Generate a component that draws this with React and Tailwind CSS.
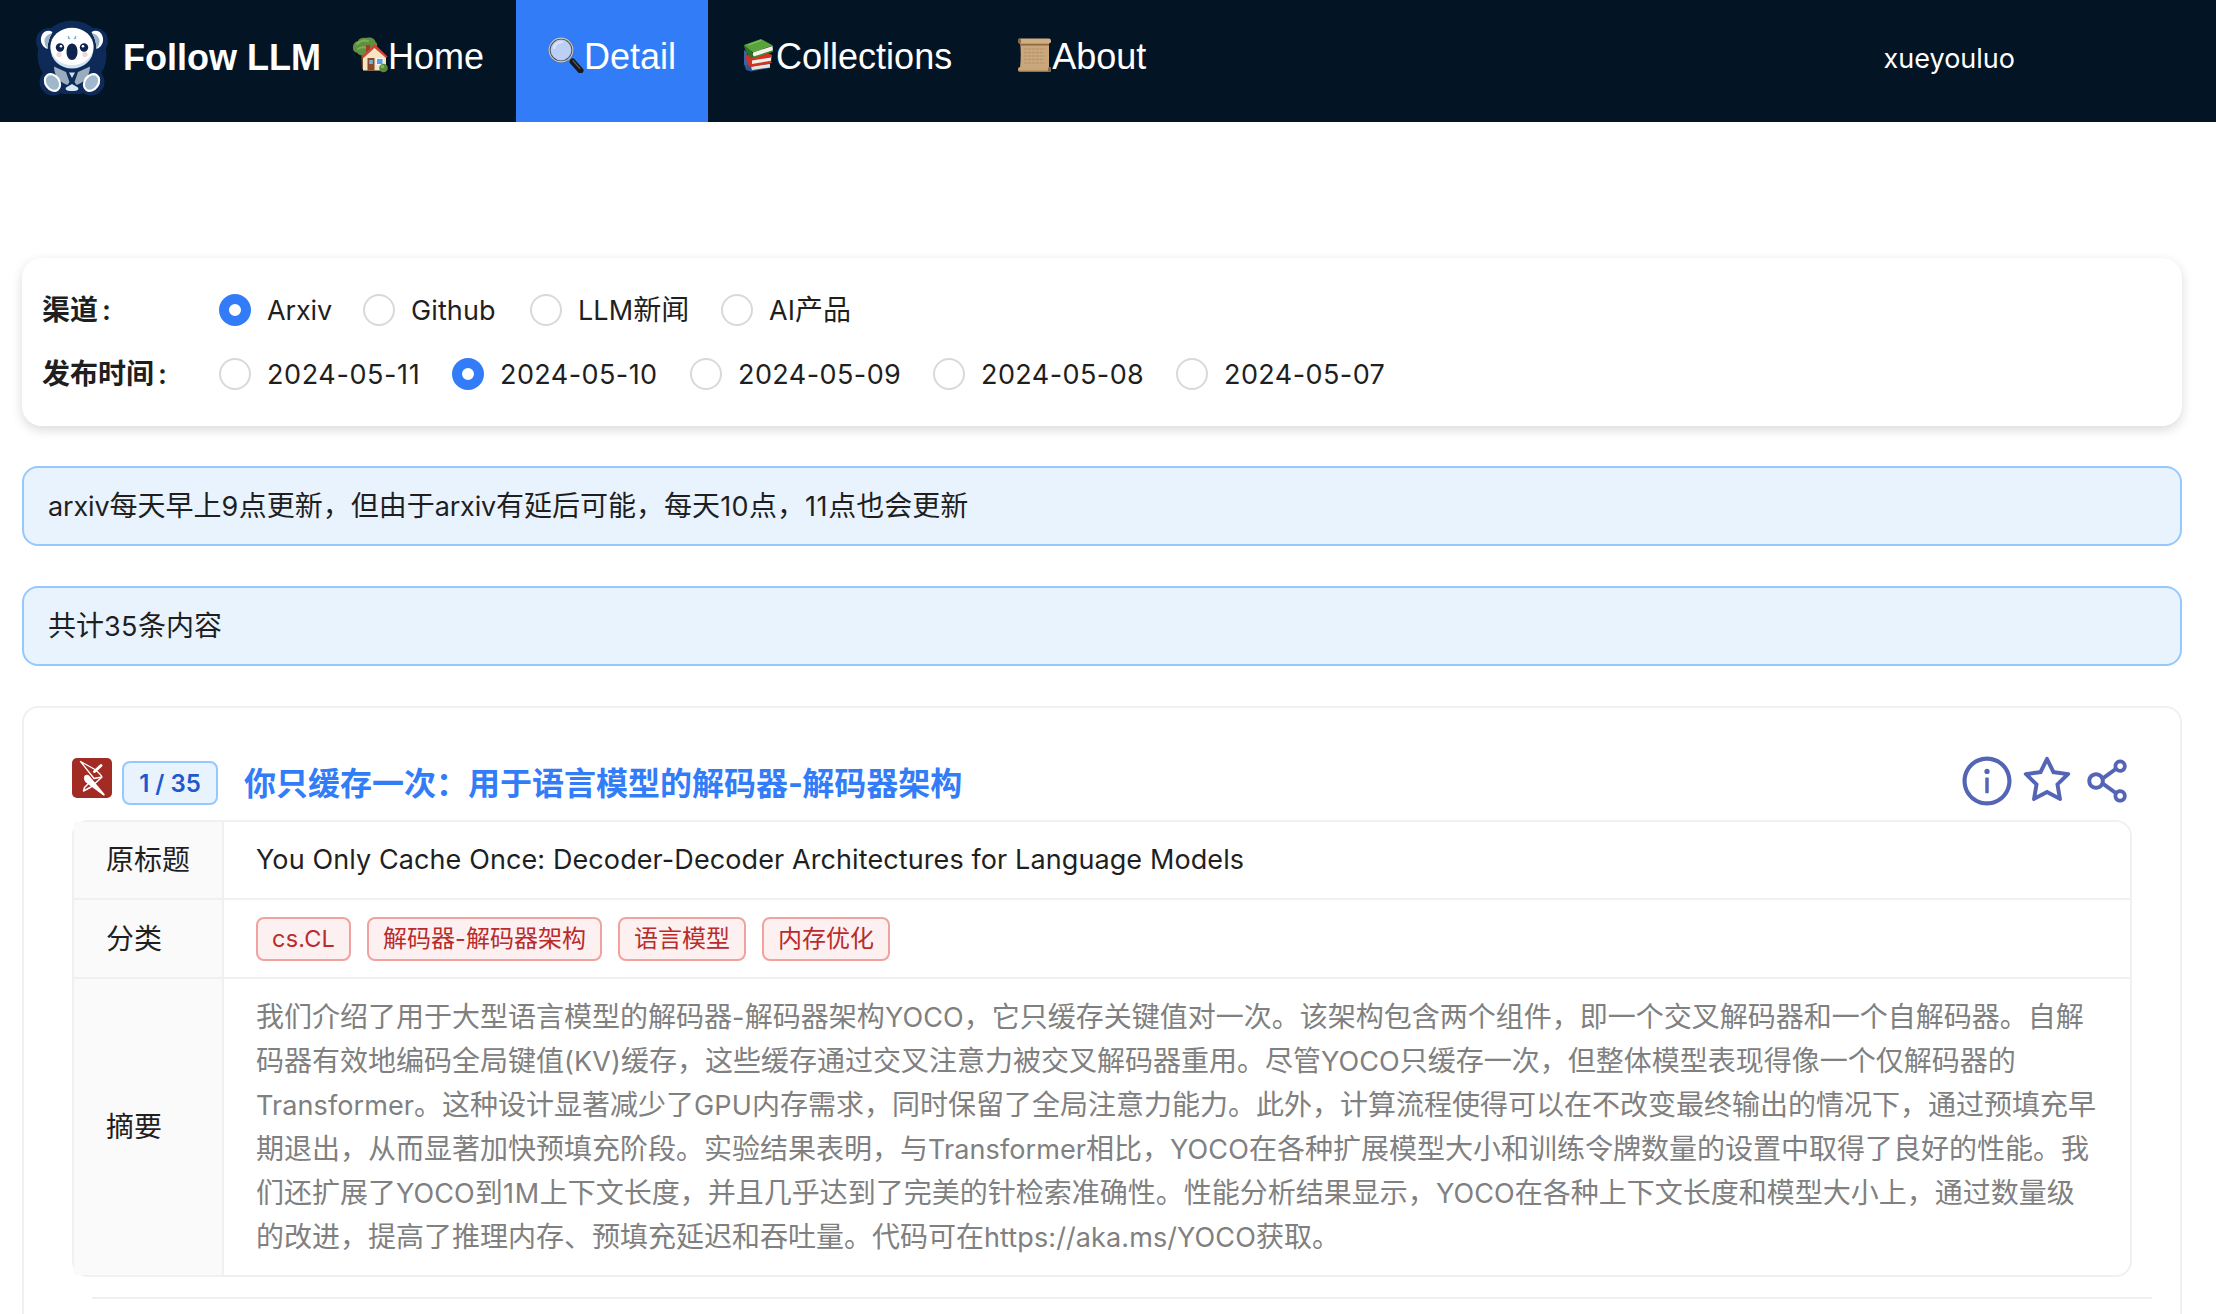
import { AiOutlineInfoCircle, AiOutlineStar, AiOutlineShareAlt } from "react-icons/ai";

function latinStyle(part) {
  if (/^11$|-11$/.test(part)) return "text-[27px] tracking-[0.6px]";
  if (/^[\d-]+$/.test(part)) return "text-[27px] tracking-[0.42px]";
  if (part === "1M") return "text-[27px] tracking-[0.8px]";
  if (/^arxiv$/i.test(part)) return "text-[27px] tracking-[-0.15px]";
  return "text-[27px] tracking-[0.1px]";
}

function Mixed({ text, latin }) {
  return text.split(/([\x20-\x7e]+)/).filter(Boolean).map((part, i) =>
    /^[\x20-\x7e]/.test(part) ? <span key={i} className={latin || latinStyle(part)}>{part}</span> : <span key={i}>{part}</span>
  );
}

function KoalaLogo() {
  return (
    <svg className="h-[80px] w-[76px] shrink-0" viewBox="0 0 76 80">
      <g fill="#0e2a58">
        <circle cx="38" cy="37" r="34.5" />
        <circle cx="15" cy="23" r="13" />
        <circle cx="61" cy="23" r="13" />
        <circle cx="19" cy="64" r="13.5" />
        <circle cx="57" cy="64" r="13.5" />
        <rect x="24" y="55" width="28" height="21" rx="6" />
      </g>
      <path d="M18.5 14C12 10 6 16 7 23c.6 4 3.5 7 6.500 8 .2-7 2-12 5-17Z" fill="#fff" />
      <path d="M18 15.500c-5 .5-8 4.500-7.500 8.500.3 3 1.500 5 3 6.500.3-6 1.800-11 4.500-15Z" fill="#9db4c8" />
      <path d="M57.500 14C64 10 70 16 69 23c-.6 4-3.500 7-6.500 8-.2-7-2-12-5-17Z" fill="#fff" />
      <path d="M58 15.500c5 .5 8 4.500 7.500 8.500-.3 3-1.500 5-3 6.500-.3-6-1.800-11-4.500-15Z" fill="#9db4c8" />
      <ellipse cx="38" cy="30.500" rx="21.500" ry="20" fill="#cfe3f0" />
      <ellipse cx="38" cy="28.500" rx="21.500" ry="18.700" fill="#fff" />
      <path d="M34 19l2 2M42 19l-2 2M34.500 18v3M41.500 18v3" stroke="#79b4d8" strokeWidth="1.300" />
      <circle cx="26" cy="29.500" r="4.200" fill="#0d2450" />
      <circle cx="50" cy="29.500" r="4.200" fill="#0d2450" />
      <circle cx="27" cy="28.300" r="1.300" fill="#fff" />
      <circle cx="49" cy="28.300" r="1.300" fill="#fff" />
      <circle cx="25" cy="36.500" r="2.600" fill="#f3d3d3" />
      <circle cx="51" cy="36.500" r="2.600" fill="#f3d3d3" />
      <path d="M38 25.500c3.600 0 5.500 3.800 5.500 8.500S41 42 38 42s-5.500-3.300-5.500-8 1.900-8.500 5.500-8.500Z" fill="#0d2450" />
      <path d="M20 48.500l12 5.500 3.500 10-2 3C27 65 20 59 20 48.500Z" fill="#9aadbf" />
      <path d="M56 48.500L44 54l-3.500 10 2 3C49 65 56 59 56 48.500Z" fill="#9aadbf" />
      <path d="M35 54.500h6L38 60Z" fill="#cfe0ec" />
      <path d="M38 66l6 3.500c1 2 0 3.500-6 3.500s-7-1.500-6-3.500Z" fill="#d5e8f3" />
      <ellipse cx="18.500" cy="64.500" rx="8" ry="10" transform="rotate(-35 18.500 64.500)" fill="#fff" />
      <ellipse cx="18.500" cy="64.500" rx="5.800" ry="8" transform="rotate(-35 18.500 64.500)" fill="#9fb8cc" />
      <ellipse cx="57.500" cy="64.500" rx="8" ry="10" transform="rotate(35 57.500 64.500)" fill="#fff" />
      <ellipse cx="57.500" cy="64.500" rx="5.800" ry="8" transform="rotate(35 57.500 64.500)" fill="#9fb8cc" />
    </svg>
  );
}

function HouseEmoji() {
  return (
    <svg className="size-9 shrink-0" viewBox="0 0 36 36">
      <path d="M9 14h3.500v18H10Z" fill="#7a4a2a" />
      <path d="M1 10C1 6 4 4.500 6 4c1-3 5-3.500 8-3 5-1.500 9 1 9.500 4 2.500 1.500 2 5 0 7-1 4-5 5-8 5-4 2.500-9 1.500-10-1C2 15.500.5 13 1 10Z" fill="#5f9040" />
      <path d="M5 7c3-3 7-4 11-3M6 12c3-2 6-2 9-1" stroke="#80ad58" strokeWidth="2" fill="none" strokeLinecap="round" />
      <path d="M11 20L23 9.500 34 20v13.500H11Z" fill="#f6e5c0" />
      <path d="M14 8h4v5l-4 3Z" fill="#a83a2c" />
      <path d="M22.500 7L35.500 19.500l-1.500 1.500L22.500 11 11.500 21l-1.500-1.500Z" fill="#cc463a" />
      <rect x="15.500" y="21" width="7" height="12.500" fill="#8a4b2a" />
      <rect x="17.200" y="23" width="3.600" height="4" fill="#6fb1e0" />
      <rect x="24.500" y="21.500" width="6.500" height="6" fill="#5f9ee0" stroke="#fff" strokeWidth=".8" />
      <circle cx="31.500" cy="31" r="4.300" fill="#5a8a38" />
      <circle cx="30.500" cy="29.500" r="1.800" fill="#83b953" />
    </svg>
  );
}

function MagnifierEmoji() {
  return (
    <svg className="size-9 shrink-0" viewBox="0 0 36 36">
      <path d="M21 22l4 4" stroke="#9aa0a6" strokeWidth="3" />
      <path d="M24.500 24.500l8 9" stroke="#17191c" strokeWidth="6" strokeLinecap="round" />
      <path d="M25 23.800l7 7.800" stroke="#55595e" strokeWidth="1.300" strokeLinecap="round" />
      <circle cx="13" cy="13" r="11.500" fill="#bcd0f5" stroke="#4b5157" strokeWidth="2.200" />
      <circle cx="13" cy="13" r="11.900" fill="none" stroke="#c9ced3" strokeWidth="1.100" />
      <path d="M6 11c1-4 4-6 8-6" stroke="#dbe6fb" strokeWidth="2.200" fill="none" strokeLinecap="round" />
    </svg>
  );
}

function BooksEmoji() {
  return (
    <svg className="size-9 shrink-0" viewBox="0 0 36 36">
      <path d="M4 27l4-3 22 1v6L11 34.500 6 33Z" fill="#2e5591" />
      <path d="M11 29.500l19-2.500v3.500L12 33Z" fill="#e9e4d8" />
      <path d="M4 13l3 2v14l-3-2Z" fill="#3766a8" />
      <path d="M5 18l21-3 6 3v2l-1 4 1 2-21 4-3-2Z" fill="#cf3328" />
      <path d="M12 23.500l19-3v3.200L12 27Z" fill="#f4efe4" />
      <path d="M4 9l2-2 6 8 2 5-3 1-5-6Z" fill="#2f7426" />
      <path d="M4 8L21 2l12 6.500L13 15.500Z" fill="#58a33c" />
      <path d="M8 8l13-4.500" stroke="#85c468" strokeWidth="1.200" />
      <path d="M13 15.500L32.500 9l.5 4.500L15 20c-2-.5-2.500-3-2-4.500Z" fill="#f4f0e6" />
      <path d="M13 20.500l20-6.500" stroke="#3c8a2a" strokeWidth="1.400" />
    </svg>
  );
}

function ScrollEmoji() {
  return (
    <svg className="size-9 shrink-0" viewBox="0 0 36 36">
      <path d="M4 4h29v27H4c1-9 1-18 0-27Z" fill="#c9a67c" />
      <path d="M5 7.500h28" stroke="#8c6a42" strokeWidth="2" />
      <path d="M8 12h21M8 15.500h20M8 19h21M8 22.500h20M8 26h21" stroke="#b6936a" strokeWidth="1" strokeDasharray="3 1" />
      <rect x="2" y="1.500" width="33" height="5" rx="2.200" fill="#cfae82" />
      <rect x="2" y="1.500" width="3" height="5" rx="1.500" fill="#8a6844" />
      <rect x="2" y="30" width="33" height="5" rx="2.200" fill="#c9a678" />
      <path d="M3 34.300h31" stroke="#8f6c45" strokeWidth="1.200" />
      <rect x="32" y="30" width="3" height="5" rx="1.500" fill="#8a6844" />
    </svg>
  );
}

function ArxivIcon() {
  return (
    <svg className="size-10 shrink-0" viewBox="0 0 40 40">
      <rect width="40" height="40" rx="5" fill="#a22b24" />
      <path d="M8.500 3.500L22 20.500l8-1.500c-1-2.500-4-5-7-7.500Z" fill="none" stroke="#fff" strokeWidth="1.300" strokeLinejoin="round" />
      <path d="M22.500 13.500L29 7.500" stroke="#fff" strokeWidth="3" strokeLinecap="round" />
      <path d="M29.500 19.500L19 29l-7.500 4 1-3.500L17 25" fill="none" stroke="#fff" strokeWidth="1.500" strokeLinejoin="round" />
      <path d="M12 20c0-3 3-4 5-2.500L32.500 36c.8 1.500-.8 2-1.800 1L14 24.500c-1.500-1.500-2-3-2-4.500Z" fill="#fff" />
    </svg>
  );
}

const NAV = [
  { label: "Home", icon: HouseEmoji, active: false },
  { label: "Detail", icon: MagnifierEmoji, active: true },
  { label: "Collections", icon: BooksEmoji, active: false },
  { label: "About", icon: ScrollEmoji, active: false },
];

function Header() {
  return (
    <header className="flex h-[122px] bg-[#031425] pl-[34px] text-white">
      <div className="flex w-[286px] items-center gap-[13px] pb-[6px] font-['Liberation_Sans',sans-serif] text-[36px] font-bold">
        <KoalaLogo />
        <span className="whitespace-nowrap pb-px">Follow LLM</span>
      </div>
      <nav className="flex font-['Liberation_Sans',sans-serif] text-[36px]">
        {NAV.map(({ label, icon: Icon, active }) => (
          <a key={label} className={active ? "flex items-center bg-[#337cf7] px-8 pb-3" : "flex items-center px-8 pb-3"}>
            <Icon />
            <span className="pt-[3px]">{label}</span>
          </a>
        ))}
      </nav>
      <div className="ml-auto mr-[201px] flex items-center pb-1 text-[27px]">xueyouluo</div>
    </header>
  );
}

const CHANNELS = [
  { label: "Arxiv", width: "w-[64px]", checked: true },
  { label: "Github", width: "w-[87px]", checked: false },
  { label: "LLM新闻", width: "w-[111px]", checked: false },
  { label: "AI产品", width: "w-[81px]", checked: false },
];
const DATES = [
  { label: "2024-05-11", width: "w-[153px]", checked: false },
  { label: "2024-05-10", width: "w-[158px]", checked: true },
  { label: "2024-05-09", width: "w-[163px]", checked: false },
  { label: "2024-05-08", width: "w-[163px]", checked: false },
  { label: "2024-05-07", width: "w-[163px]", checked: false },
];

function RadioRow({ label, options }) {
  return (
    <div className="flex h-16 items-center">
      <div className="w-[177px] font-semibold">{label}<span className="ml-1">:</span></div>
      <div className="flex gap-8">
        {options.map((o) => (
          <label key={o.label} className="flex items-center gap-4">
            <span className={o.checked ? "size-8 rounded-full border-[10px] border-[#337cf7] bg-white" : "size-8 rounded-full border-2 border-[#d9d9d9] bg-white"} />
            <span className={`${o.width} whitespace-nowrap`}><Mixed text={o.label} /></span>
          </label>
        ))}
      </div>
    </div>
  );
}

function Alert({ text }) {
  return (
    <div className="mt-10 flex h-20 items-center rounded-2xl border-2 border-[#97c8fc] bg-[#e9f3fe] px-6">
      <span><Mixed text={text} /></span>
    </div>
  );
}

const TAGS = ["cs.CL", "解码器-解码器架构", "语言模型", "内存优化"];
const ABSTRACT = [
  "我们介绍了用于大型语言模型的解码器-解码器架构YOCO，它只缓存关键值对一次。该架构包含两个组件，即一个交叉解码器和一个自解码器。自解",
  "码器有效地编码全局键值(KV)缓存，这些缓存通过交叉注意力被交叉解码器重用。尽管YOCO只缓存一次，但整体模型表现得像一个仅解码器的",
  "Transformer。这种设计显著减少了GPU内存需求，同时保留了全局注意力能力。此外，计算流程使得可以在不改变最终输出的情况下，通过预填充早",
  "期退出，从而显著加快预填充阶段。实验结果表明，与Transformer相比，YOCO在各种扩展模型大小和训练令牌数量的设置中取得了良好的性能。我",
  "们还扩展了YOCO到1M上下文长度，并且几乎达到了完美的针检索准确性。性能分析结果显示，YOCO在各种上下文长度和模型大小上，通过数量级",
  "的改进，提高了推理内存、预填充延迟和吞吐量。代码可在https://aka.ms/YOCO获取。",
];

function Row({ name, height, last, children }) {
  return (
    <div className={`flex ${height} ${last ? "" : "border-b-2 border-[#f0f0f0]"}`}>
      <div className="flex w-[150px] items-center border-r-2 border-[#f0f0f0] bg-[#fafafa] pl-8">{name}</div>
      <div className="flex flex-1 items-center pl-8">{children}</div>
    </div>
  );
}

function Paper() {
  return (
    <article className="mt-10 h-[700px] rounded-2xl border-2 border-[#f0f0f0] px-12 pt-[45px]">
      <div className="flex h-[67px] items-start">
        <div className="mt-[5px]"><ArxivIcon /></div>
        <span className="ml-[10px] mt-2 flex h-11 w-24 items-center justify-center rounded-lg border-2 border-[#97c8fc] bg-[#e9f3fe] pt-px text-[24px] font-semibold text-[#2059cc]">1 / 35</span>
        <h2 className="ml-[26px] mt-[7px] whitespace-nowrap text-[32px] leading-[48px] font-bold text-[#337cf7]"><Mixed text="你只缓存一次：用于语言模型的解码器-解码器架构" latin="text-[32px] tracking-[-0.8px]" /></h2>
        <div className="-mr-[3px] ml-auto flex gap-1 text-[56px] text-[#5565b6]">
          <AiOutlineInfoCircle /><AiOutlineStar /><AiOutlineShareAlt />
        </div>
      </div>
      <div className="rounded-2xl border-2 border-[#f0f0f0]">
        <Row name="原标题" height="h-[78px]"><Mixed text="You Only Cache Once: Decoder-Decoder Architectures for Language Models" /></Row>
        <Row name="分类" height="h-[79px]">
          <div className="flex gap-4">
            {TAGS.map((t) => (
              <span key={t} className="flex h-11 items-center rounded-lg border-2 border-[#f2a29e] bg-[#fdf0f0] px-[14px] text-[24px] text-[#ba2b2c]"><Mixed text={t} latin="text-[23.5px] tracking-[0.2px]" /></span>
            ))}
          </div>
        </Row>
        <Row name="摘要" height="h-[296px]" last>
          <div className="leading-[44px] text-[#808080]">
            {ABSTRACT.map((l) => <p key={l} className="h-11 whitespace-nowrap"><Mixed text={l} /></p>)}
          </div>
        </Row>
      </div>
      <hr className="-mr-5 ml-5 mt-5 border-t-2 border-[#f0f0f0]" />
    </article>
  );
}

export default function App() {
  return (
    <div className="h-[1314px] overflow-hidden bg-white font-['Inter','Noto_Sans_CJK_SC',sans-serif] text-[28px] leading-[44px] text-[#1f1f1f]">
      <Header />
      <main className="mt-[136px] ml-[22px] w-[2160px]">
        <section className="h-[168px] rounded-[20px] bg-white px-5 pt-5 shadow-[0_4px_12px_rgba(0,0,0,0.15)]">
          <RadioRow label="渠道" options={CHANNELS} />
          <RadioRow label="发布时间" options={DATES} />
        </section>
        <Alert text="arxiv每天早上9点更新，但由于arxiv有延后可能，每天10点，11点也会更新" />
        <Alert text="共计35条内容" />
        <Paper />
      </main>
    </div>
  );
}
